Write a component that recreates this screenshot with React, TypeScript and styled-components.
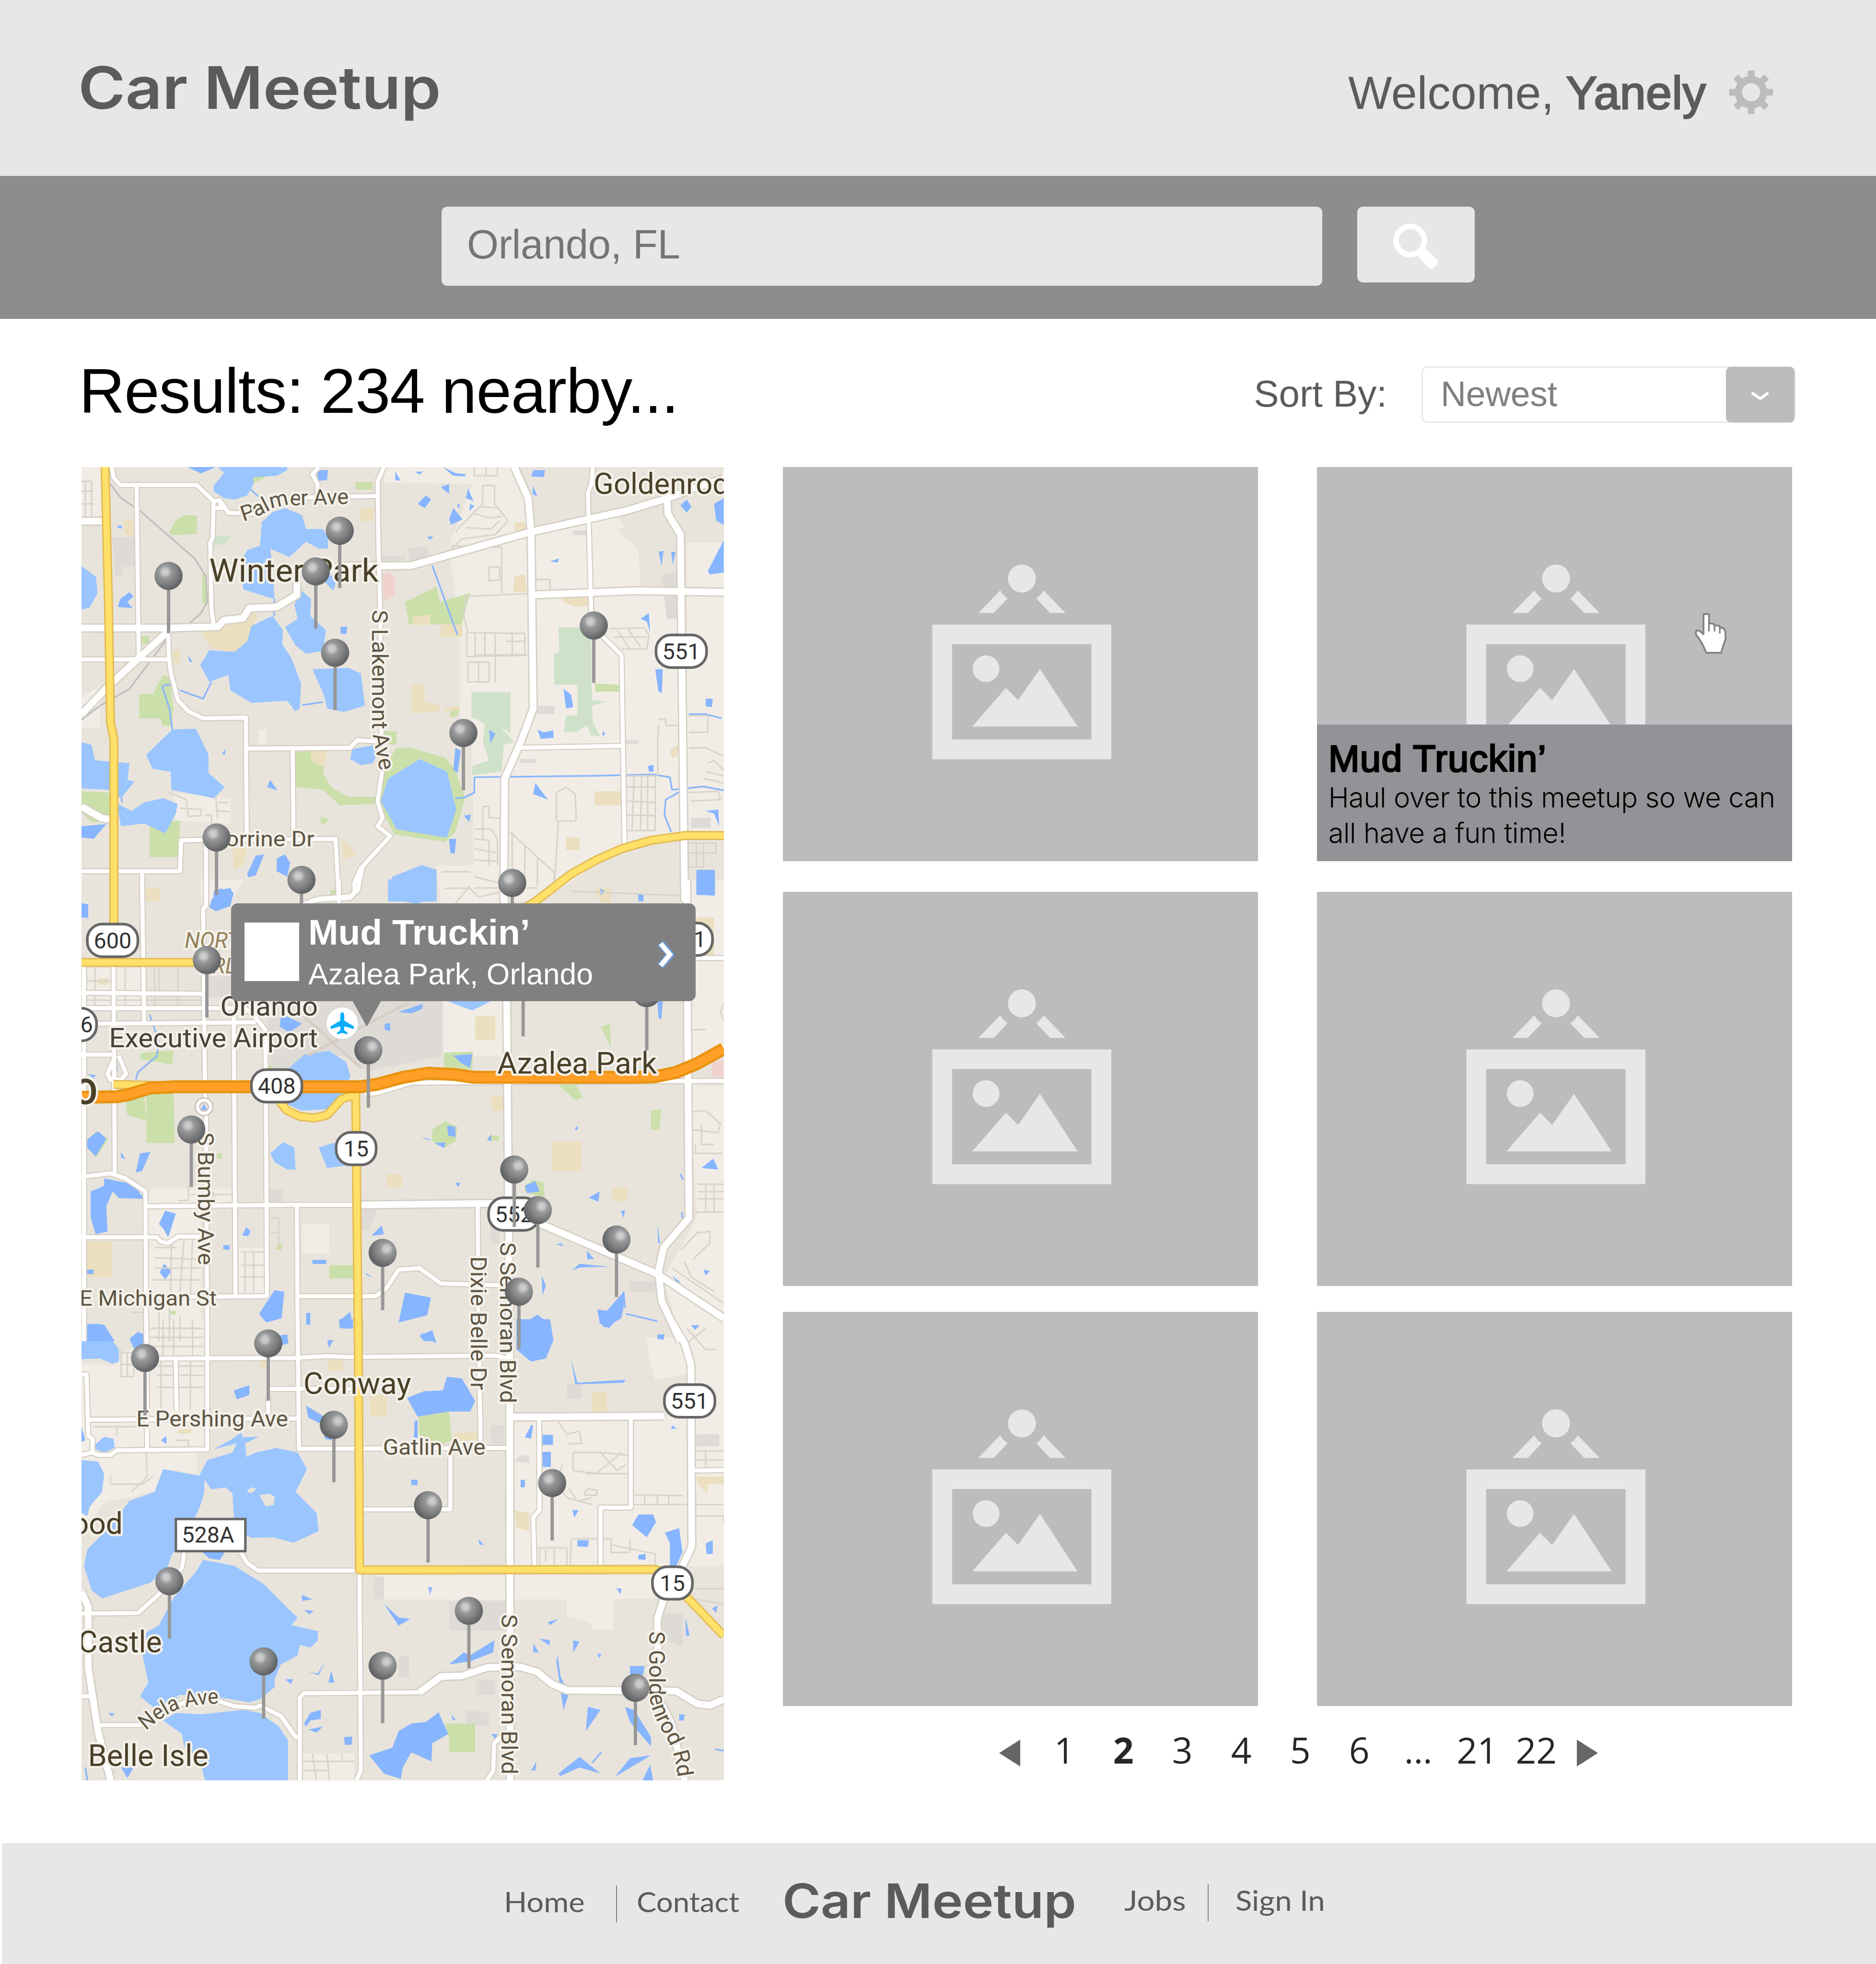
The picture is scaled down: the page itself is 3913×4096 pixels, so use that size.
import React from "react";
import styled, { createGlobalStyle, css } from "styled-components";

const Page = createGlobalStyle`
  body { margin: 0; background: #fff; }
  *, *::before, *::after { box-sizing: border-box; }
`;

const sans = `"Liberation Sans", Arial, sans-serif`;
const ink = "#5b5b5b";
const panel = "#e6e7e8";
const silver = "#bbbcbe";

/* ---------- layout ---------- */

const Screen = styled.div`
  width: 3913px;
  height: 4096px;
  display: flex;
  flex-direction: column;
  overflow: hidden;
  font-family: ${sans};
  color: ${ink};
`;

const Header = styled.header`
  height: 366.6px;
  flex: none;
  display: flex;
  align-items: baseline;
  justify-content: space-between;
  padding: 121.8px 214.7px 0 163px;
  background: ${panel};
`;

const Logo = styled.div<{ $size: number }>`
  width: max-content;
  font-family: Inter, sans-serif;
  font-weight: 600;
  font-size: ${(p) => p.$size}px;
  line-height: 1;
  white-space: nowrap;
  transform: scaleX(1.097);
  transform-origin: left;
`;

const Account = styled.div`
  display: flex;
  align-items: baseline;
  font-size: 97px;
  line-height: 97px;
  white-space: nowrap;
`;

const UserName = styled.span`
  margin-left: 25px;
  letter-spacing: 0.4px;
  -webkit-text-stroke: 3px ${ink};
`;

const Gear = styled.svg`
  width: 91px;
  height: 91px;
  margin-left: 49px;
  transform: translateY(10.9px);
`;

const SearchBar = styled.section`
  height: 298.5px;
  flex: none;
  display: flex;
  align-items: flex-start;
  gap: 73.5px;
  padding: 64.4px 0 0 921px;
  background: #8d8d8d;
`;

const SearchField = styled.div`
  width: 1836.9px;
  height: 165.3px;
  display: flex;
  align-items: center;
  padding: 0 0 8px 53px;
  border-radius: 12px;
  background: ${panel};
  color: #757575;
  font-size: 85px;
  letter-spacing: -0.4px;
`;

const SearchButton = styled.button`
  width: 244.6px;
  height: 158px;
  padding: 0;
  border: 0;
  border-radius: 12px;
  background: ${panel};
  svg { display: block; width: 100%; height: 100%; }
`;

const Main = styled.main`
  height: 3178.7px;
  flex: none;
`;

const TitleRow = styled.div`
  height: 308.7px;
  display: flex;
  align-items: flex-start;
  justify-content: space-between;
  padding: 84.5px 168.4px 0 165px;
`;

const Title = styled.h1`
  margin: 0;
  font-size: 132px;
  line-height: 132px;
  font-weight: 400;
  letter-spacing: -1.1px;
  color: #000;
`;

const Sort = styled.div`
  display: flex;
  align-items: center;
  margin-top: 14.3px;
  gap: 72px;
`;

const SortLabel = styled.span`
  padding-bottom: 5px;
  font-size: 78px;
  line-height: 78px;
`;

const Select = styled.div`
  width: 779.6px;
  height: 118.5px;
  display: flex;
  align-items: center;
  justify-content: space-between;
  border: 3.6px solid ${panel};
  border-radius: 12px;
  padding-left: 37px;
  color: #808080;
  font-size: 73.5px;
  line-height: 73px;
  letter-spacing: -0.4px;
  > span { padding-bottom: 3px; }
`;

const SelectArrow = styled.div`
  width: 142.5px;
  height: 115.4px;
  margin-right: -1px;
  border-radius: 10px;
  background: ${silver};
  svg { display: block; width: 100%; height: 100%; }
`;

const Content = styled.div`
  display: flex;
  align-items: flex-start;
  gap: 123.4px;
  padding-left: 169.9px;
`;

const MapFrame = styled.div`
  position: relative;
  width: 1340px;
  height: 2739px;
  flex: none;
  > svg { display: block; width: 100%; height: 100%; }
`;

const Callout = styled.div`
  position: absolute;
  left: 312.3px;
  top: 910.2px;
  width: 968.4px;
  height: 204.2px;
  display: flex;
  align-items: flex-start;
  border-radius: 14px;
  background: #808080;
  color: #fff;
  white-space: nowrap;
  &::after {
    content: "";
    position: absolute;
    left: 252.6px;
    top: 203px;
    border: solid transparent;
    border-width: 54px 30.3px 0;
    border-top-color: #808080;
  }
`;

const CalloutThumb = styled.div`
  width: 114.9px;
  height: 121.6px;
  margin: 40px 18.6px 0 27.4px;
  background: #fff;
`;

const CalloutText = styled.div`
  flex: 1;
  padding-top: 23px;
  strong { display: block; font-size: 75px; line-height: 75px; }
  span { display: block; margin-top: 9.5px; font-size: 62.5px; line-height: 80px; }
`;

const CalloutChevron = styled.svg`
  width: 38.5px;
  height: 59.6px;
  margin: 77px 44px 0 0;
`;

const Results = styled.div`
  width: 2104.4px;
`;

const Grid = styled.div`
  display: grid;
  grid-template-columns: 991px 991px;
  column-gap: 122.4px;
`;

const Card = styled.article<{ $gap: number }>`
  position: relative;
  height: 822.3px;
  margin-top: ${(p) => p.$gap}px;
  background: ${silver};
  > svg { display: block; width: 100%; height: 100%; }
`;

const Caption = styled.div`
  position: absolute;
  left: 0;
  right: 0;
  bottom: 0;
  height: 284.6px;
  padding: 31.5px 0 0 24px;
  background: #929396;
  color: #000;
  white-space: nowrap;
  h2 {
    margin: 0;
    font-size: 78px;
    line-height: 78px;
    font-weight: 400;
    letter-spacing: 1.1px;
    -webkit-text-stroke: 3px #000;
  }
  p {
    margin: 6.4px 0 0;
    font-family: Inter, sans-serif;
    font-weight: 300;
    font-size: 58px;
    line-height: 73.3px;
    letter-spacing: -0.5px;
  }
`;

const Cursor = styled.svg`
  && {
    position: absolute;
    left: 787.4px;
    top: 303.6px;
    width: 68.8px;
    height: 88.4px;
  }
`;

const Pager = styled.nav`
  display: flex;
  align-items: flex-start;
  margin: 53.6px 0 0 450.7px;
  font-family: "Open Sans", sans-serif;
  font-size: 75px;
  line-height: 75px;
  color: #262626;
`;

const PageLink = styled.span<{ $current?: boolean }>`
  width: 123px;
  padding-left: 1px;
  text-align: center;
  ${(p) => p.$current && css`font-weight: 700;`}
`;

const Arrow = styled.i<{ $next?: boolean }>`
  margin: ${(p) => (p.$next ? "16.6px 0 0 23.5px" : "16.6px 30.3px 0 0")};
  border: solid transparent;
  border-width: ${(p) => (p.$next ? "28.2px 0 28.2px 44.2px" : "28.2px 44.2px 28.2px 0")};
  ${(p) => (p.$next ? "border-left-color" : "border-right-color")}: #666;
`;

const Footer = styled.footer`
  height: 252.2px;
  flex: none;
  display: flex;
  align-items: flex-start;
  margin-left: 3.7px;
  background: ${panel};
`;

const FooterLink = styled.a<{ $left: number; $width: number; $top: number; $stretch: number }>`
  flex: none;
  width: ${(p) => p.$width}px;
  margin: ${(p) => p.$top}px 0 0 ${(p) => p.$left}px;
  font-family: Lato, sans-serif;
  font-size: 59px;
  line-height: 60px;
  white-space: nowrap;
  transform: scaleX(${(p) => p.$stretch});
  transform-origin: left;
`;

const Divider = styled.i<{ $left: number; $top: number }>`
  width: 2px;
  height: 77px;
  margin: ${(p) => p.$top}px 0 0 ${(p) => p.$left}px;
  background: #808080;
`;

const FooterLogo = styled.div`
  width: 610px;
  flex: none;
  margin: 71.4px 0 0 89.8px;
`;

/* ---------- map artwork ---------- */

type Tile = {
  top: number;
  sy: number;
  light: string[];
  grey: string[];
  park: string[];
  golf: string[];
  tan: string[];
  pink: string[];
  lake: string[];
  pond: string[];
  stream: string[];
  rail: string[];
  lane: string[];
  street: string[];
  avenue: string[];
  yellow: string[];
  orange: string[];
};

const SX = 0.95663;

const north: Tile = {
  top: 1050,
  sy: 0.63776,
  light: [
    "735,19 1060,19 1060,80 735,75",
    "945,80 1060,80 1095,240 1215,200 1285,185 1310,235 1285,240 1340,310 1345,450 1440,450 1450,1330 1300,1380 1110,1568 950,1568 945,1000 915,900 915,600 890,300",
    "1455,290 1543,290 1543,1330 1455,1330",
    "16,19 72,19 72,225 16,225",
    "235,1180 370,1200 370,1290 240,1280",
    "860,1440 950,1440 950,1568 870,1568",
    "438,955 456,955 456,1008 438,1008",
    "16,840 60,800 60,950 16,950",
  ],
  grey: [
    "88,268 145,268 145,370 115,375 112,410 95,408 95,370",
    "730,335 785,335 785,352 730,352",
    "793,310 835,298 845,335 850,350 795,358",
    "1185,245 1218,245 1218,262 1185,262",
    "1395,405 1436,390 1436,560 1408,560",
    "1310,992 1340,992 1340,1006 1310,1006",
    "1058,1060 1098,1060 1098,1074 1058,1074",
    "1465,1270 1512,1270 1512,1305 1465,1305",
    "1100,870 1140,870 1140,900 1100,900",
  ],
  park: [
    "225,250 240,210 262,190 291,192 290,258 228,262",
    "153,828 185,828 210,760 225,770 235,880 228,945 208,940 205,915 153,915",
    "178,1285 250,1280 249,1410 178,1410",
    "785,500 860,445 868,500 940,468 920,580 795,580",
    "525,1035 600,1030 590,1110 610,1160 650,1195 720,1195 718,1220 630,1225 590,1170 525,1160",
    "735,1090 765,1020 800,1020 880,1055 905,1100 928,1200 905,1320 880,1355 760,1330 725,1230",
    "667,72 708,72 708,100 667,100",
    "1236,790 1295,795 1295,820 1238,820",
    "16,1175 80,1180 90,1240 90,1285 40,1285 16,1250",
    "735,960 766,962 764,1008 735,1008",
    "893,885 915,885 908,910 893,910",
    "303,400 314,400 314,505 303,505",
    "160,622 177,622 177,650 160,650",
    "585,1265 605,1275 595,1292 585,1290",
    "425,40 458,50 425,78",
    "608,1528 622,1528 622,1545 608,1545",
  ],
  golf: [
    "1150,590 1200,590 1228,640 1228,760 1232,930 1250,980 1228,975 1218,940 1190,965 1162,965 1168,905 1195,905 1195,795 1140,795 1140,685 1152,680",
    "943,822 1036,822 1036,970 1010,940 1045,1000 1020,1010 1015,1105 945,1118 945,1085 985,1065 970,1000 975,935 943,910",
    "330,268 375,262 360,290 332,300",
    "1230,850 1265,855 1232,870",
  ],
  tan: [
    "300,610 350,590 420,540 435,545 412,640 380,680 325,665",
    "800,795 832,795 832,855 870,870 865,890 800,898",
    "675,168 712,165 708,212 678,212",
    "1045,410 1070,400 1075,465 1042,465",
    "1045,215 1068,215 1078,250 1045,245",
    "1160,480 1225,480 1220,515 1190,518 1160,500",
    "870,580 922,580 922,625 870,625",
    "803,552 845,545 845,582 803,582",
    "1236,1175 1300,1175 1300,1225 1236,1225",
    "1168,1340 1200,1340 1200,1385 1168,1385",
    "635,1345 672,1400 638,1420",
    "115,208 140,208 140,262 120,262",
    "232,672 252,672 250,718 235,718",
    "562,1032 600,1032 592,1090 562,1065",
    "375,1380 410,1380 400,1440 378,1455",
    "16,1075 50,1080 30,1105 16,1105",
    "168,1525 203,1520 198,1568 170,1568",
    "1238,1525 1275,1530 1272,1568 1250,1568",
    "1415,1030 1436,1005 1432,1050 1420,1058",
    "880,878 915,868 915,885 880,892",
  ],
  pink: ["732,400 745,390 762,420 760,480 735,497", "16,1105 40,1110 20,1135"],
  lake: [
    "340,19 505,19 505,30 480,50 425,55 425,80 410,120 380,135 355,130 330,105 330,85 355,40",
    "500,165 540,190 550,240 590,240 602,270 602,310 580,310 550,285 510,340 465,310 470,370 475,490 400,455 398,345 410,315 440,300 445,215 470,180",
    "470,550 495,600 493,650 515,700 538,790 535,880 524,890 505,852 420,860 370,815 365,760 320,785 298,725 320,672 380,678 410,640 420,585",
    "540,460 562,490 560,550 597,600 590,675 550,685 525,655 500,590 530,560 522,510",
    "565,740 650,735 680,755 690,870 640,892 600,880 592,830",
    "232,955 288,952 318,1045 318,1110 356,1160 332,1200 230,1170 228,1105 185,1095 170,1045",
    "16,372 50,410 54,470 35,520 16,528",
    "16,1000 40,1010 48,1065 130,1075 125,1135 142,1140 110,1200 80,1170 16,1165",
    "100,1218 135,1245 165,1215 210,1200 245,1220 240,1255 215,1325 165,1290 110,1300",
    "820,1060 885,1105 907,1240 885,1340 850,1332 765,1310 728,1210 745,1130",
    "755,1480 825,1438 860,1455 860,1568 745,1568 745,1530",
    "660,1025 712,1010 725,1030 708,1075 680,1082 655,1060",
    "590,400 625,410 615,460 595,430",
  ],
  pond: [
    "268,19 300,42 335,19",
    "575,30 602,30 600,65 580,68",
    "815,150 835,120 847,135 832,165",
    "870,90 890,80 890,115",
    "935,95 948,140 930,130",
    "762,35 775,68 762,65",
    "808,35 828,35 820,46",
    "890,205 900,165 922,205 895,225",
    "908,155 915,150 915,168",
    "940,150 950,158 938,176",
    "838,268 852,265 845,280",
    "1090,30 1118,30 1115,55 1085,52",
    "1090,85 1100,125 1088,115",
    "1440,155 1455,135 1466,160 1455,182",
    "1520,150 1543,130 1543,225 1525,210",
    "1505,390 1543,280 1543,395 1510,402",
    "1388,320 1400,318 1395,372",
    "1418,320 1428,322 1422,368",
    "1130,355 1152,345 1148,360",
    "130,465 140,480 125,500 138,522 102,518 108,490",
    "632,588 648,588 645,615 632,612",
    "1162,810 1180,830 1185,875 1168,880",
    "1345,560 1365,540 1368,610 1360,570",
    "1100,955 1115,965 1138,958 1138,985 1108,988",
    "1500,845 1517,845 1515,875 1500,872",
    "457,1160 465,1135 482,1172",
    "1095,1145 1125,1205 1090,1185",
    "905,1020 918,1030 910,1110 900,1100",
    "410,1470 430,1405 450,1400 430,1475 412,1482",
    "480,1415 500,1400 512,1430 505,1480 480,1460",
    "1478,1455 1522,1455 1522,1545 1478,1545",
    "890,1345 907,1345 903,1398 893,1395",
    "330,1530 370,1520 378,1545 350,1568 330,1568",
    "1380,740 1398,740 1396,825 1388,820",
    "925,1262 942,1258 938,1285",
    "875,19 905,40 930,45 928,52 900,50",
    "16,1300 75,1292 45,1345 16,1340",
    "1500,1245 1530,1240 1532,1300 1520,1255",
    "1363,1085 1376,1080 1376,1105 1365,1105",
    "270,690 280,715 272,712",
    "985,955 1000,970 988,1005",
    "1255,960 1262,970 1255,980",
    "350,1040 358,1025 357,1045",
    "102,228 112,228 112,238 102,236",
    "1340,1540 1352,1540 1352,1568 1340,1568",
  ],
  stream: [
    "230,795 218,795 208,803 225,880 232,955",
    "250,815 305,845 325,785",
    "540,868 590,857",
    "475,490 474,550",
    "850,370 910,618",
    "905,1200 925,1198 950,1180 950,1125 1230,1120 1375,1115 1415,1125 1420,1170 1495,1158 1543,1172",
    "1440,1175 1405,1205 1402,1260 1418,1320",
    "1460,900 1500,900 1538,915",
    "415,95 445,135",
    "48,1065 62,1088",
    "110,1190 112,1215",
  ],
  rail: [
    "85,80 110,130 140,160",
    "155,175 285,345 312,410 315,500 300,540 262,590",
    "222,625 180,710 130,810 60,870 16,920",
  ],
  lane: [
    "950,19 950,50 1005,50 1005,19",
    "978,19 978,50",
    "970,85 998,85 998,150 1030,210 1000,260 920,275 890,320",
    "970,85 970,150 930,210 905,250",
    "960,160 1010,165",
    "950,185 985,200 1015,195",
    "930,235 990,240 1010,210",
    "895,300 1015,305 1015,470",
    "985,375 1010,375 1010,420 985,425 985,375",
    "930,480 1085,470",
    "930,480 925,550 935,610 1070,612 1070,690 932,695 932,610",
    "952,610 952,695",
    "975,610 975,695",
    "1000,610 1000,790",
    "1025,640 1070,640",
    "1040,612 1040,690",
    "935,715 985,715 985,785 935,785 935,715",
    "960,715 960,785",
    "950,690 1080,688",
    "1270,595 1355,592 1365,620 1360,668 1300,668",
    "1290,600 1318,665",
    "1315,597 1345,660",
    "1280,625 1360,625",
    "1386,918 1405,918 1405,940 1440,940",
    "1460,1020 1500,1020 1543,1050",
    "1460,905 1505,905 1505,965 1460,965",
    "1505,1075 1520,1065 1543,1100",
    "1500,1105 1543,1120",
    "1495,1130 1543,1145",
    "1310,1120 1380,1120 1380,1315 1310,1315",
    "1330,1120 1325,1315",
    "1348,1120 1345,1315",
    "1362,1120 1362,1315",
    "1310,1160 1380,1160",
    "1310,1210 1380,1215",
    "1310,1260 1380,1262",
    "1460,1180 1530,1175 1535,1205 1465,1210",
    "1145,1280 1145,1180 1168,1160 1190,1185 1192,1280 1145,1282",
    "970,1350 970,1230 985,1228 985,1270 1010,1270",
    "950,1310 990,1310 1005,1345 1005,1440",
    "950,1345 985,1350 985,1440",
    "950,1380 1005,1395",
    "950,1420 1005,1425",
    "950,1480 1005,1500",
    "1035,1320 1140,1465 1140,1520",
    "1040,1320 1040,1500",
    "1070,1370 1070,1500",
    "1100,1415 1100,1510",
    "1150,1282 1140,1520",
    "950,1520 1100,1520",
    "225,1180 265,1205 270,1265 300,1262 300,1240 250,1235",
    "335,1190 340,1275",
    "340,1215 365,1215",
    "340,1245 368,1248",
    "310,1260 325,1260 325,1310",
    "872,1462 940,1462",
    "16,70 40,70 40,195",
    "16,105 45,105",
    "16,150 45,150",
    "25,70 25,195",
    "1460,1360 1525,1360 1525,1395 1460,1395",
    "1478,1360 1478,1445",
    "1495,1360 1495,1445 1460,1445",
    "1095,420 1130,420 1130,460",
    "1388,940 1386,1000 1386,1120",
  ],
  street: [
    "88,19 92,55 108,83 290,83 330,140 328,270 322,290 325,530 330,580",
    "147,88 152,700",
    "330,140 345,138 365,182 430,185",
    "330,165 350,165 345,140",
    "530,128 718,122",
    "580,19 565,45 577,80 577,125",
    "735,19 720,70 722,300 726,520 730,1110 720,1210 732,1270 720,1300 750,1335 680,1450 665,1500 665,1540",
    "16,705 222,705",
    "222,600 224,700 228,750 245,850 270,890 305,915 407,912 407,1020 409,1345",
    "409,1023 655,1020 672,993 720,998",
    "518,1020 520,1345",
    "16,1460 250,1460 253,1350 310,1348 620,1345 628,1568",
    "160,1460 160,1568",
    "312,1345 312,1568",
    "1232,19 1228,80 1220,110 1228,540",
    "1240,600 1300,690 1307,1360",
    "1055,1020 1305,1013",
    "560,1568 580,1558 655,1550 672,1530 685,1440",
  ],
  avenue: [
    "16,593 225,593 340,588 355,565 400,558 415,522 480,518 528,475 528,430",
    "225,600 80,800 16,900",
    "640,372 800,370 1080,252 1310,175 1410,130 1480,90 1543,60",
    "1408,120 1410,185 1440,260 1450,1568",
    "1045,19 1078,130 1085,252 1090,880 1060,1000 1022,1130 1020,1568",
    "1090,475 1330,460 1543,465",
    "16,212 75,212",
    "16,1230 65,1272 95,1275",
  ],
  yellow: ["72,19 80,500 85,930 93,990 93,1568", "1060,1600 1095,1568 1180,1470 1240,1420 1300,1380 1370,1350 1450,1333 1543,1333"],
  orange: [],
};

const central: Tile = {
  top: 2000,
  sy: 0.66964,
  light: [
    "870,0 1020,0 1020,90 870,90",
    "180,1050 380,1050 380,1090 300,1110 300,1568 170,1568 170,1110",
    "875,413 1020,413 1020,600 875,600",
    "1460,0 1543,0 1543,600 1460,620",
    "1460,700 1543,700 1543,1568 1440,1568 1400,1350 1480,1150",
    "390,1250 455,1250 455,1410 390,1410",
    "540,1170 605,1170 605,1270 540,1270",
    "90,300 160,300 160,430 30,430 30,300",
    "300,0 400,0 372,80 300,80",
  ],
  grey: [
    "455,413 875,413 875,600 700,650 640,600 560,590 510,640 465,645",
    "318,330 372,330 372,400 318,400",
    "988,1160 1010,1160 1010,1235 988,1235",
    "1318,1365 1380,1365 1380,1400 1318,1400",
    "460,1050 495,1055 495,1095 460,1095",
    "680,1120 718,1120 700,1190 680,1190",
  ],
  park: [
    "170,725 235,725 238,895 170,895",
    "120,745 165,735 170,820 125,800",
    "155,590 235,580 232,630 200,620 155,610",
    "877,588 947,585 945,645 878,648",
    "850,850 880,820 910,840 905,890 880,910 850,890",
    "1370,785 1395,780 1390,850 1370,850",
    "25,900 50,855 80,880 50,945",
    "1070,1040 1090,1020 1115,1030 1118,1085 1070,1060",
    "1145,690 1185,680 1208,740 1190,750",
    "605,1310 662,1310 662,1355 605,1355",
    "1250,500 1272,490 1275,570 1285,600",
    "338,930 350,930 350,948 338,948",
    "985,870 1010,872 1008,888 985,886",
    "485,1230 495,1240 490,1260 478,1255",
    "455,625 490,650 500,690 465,680",
    "228,1465 240,1465 240,1478 228,1478",
  ],
  golf: ["60,1290 70,1270 75,1310 60,1315"],
  tan: [
    "952,465 1000,465 1000,545 952,545",
    "1135,890 1205,890 1205,990 1135,990",
    "742,1000 778,1000 778,1045 742,1045",
    "1278,1045 1315,1045 1312,1095 1278,1090",
    "990,735 1018,735 1018,785 990,785",
    "25,1230 90,1230 90,1350 25,1350",
    "170,30 205,30 200,75 172,72",
    "1240,30 1275,30 1275,80 1250,80",
    "55,335 80,335 80,358 55,358",
    "1475,130 1520,130 1520,260 1475,260",
    "1035,600 1050,620 1040,650",
  ],
  pink: ["1515,615 1543,615 1543,670 1515,670"],
  lake: [
    "510,640 545,595 605,582 645,620 655,665 640,740 600,780 540,785 500,760",
    "745,0 860,0 860,65 810,82 745,65",
    "885,413 990,413 945,445",
    "580,910 615,895 660,900 655,970 600,980",
    "465,930 495,892 522,910 525,985 505,985 475,960",
  ],
  pond: [
    "490,455 540,490 510,520 488,500",
    "325,70 345,30 378,45 370,90 335,108 320,95",
    "70,1015 140,1035 165,1085 105,1082 90,1060 75,1110 78,1195 50,1205 38,1150 38,1060 70,1040",
    "200,1170 215,1125 240,1135 228,1190 222,1215 210,1185",
    "145,995 155,930 180,925 160,990",
    "438,1475 475,1395 498,1400 492,1490 455,1505",
    "770,1505 785,1403 847,1420 838,1480",
    "628,1500 655,1468 662,1525 640,1525",
    "550,1472 560,1472 560,1512 550,1512",
    "1050,1568 1065,1510 1100,1478 1130,1510 1138,1568",
    "1478,0 1522,0 1522,55 1478,52",
    "16,1510 70,1512 95,1568 16,1568",
    "900,598 945,593 940,640 920,625",
    "27,885 55,855 75,880 50,940 25,905",
    "1070,1040 1095,1025 1105,1060 1075,1065",
    "885,835 905,840 905,875 888,870",
    "855,895 882,893 878,913",
    "1222,1080 1248,1060 1245,1095",
    "1490,980 1518,948 1530,985",
    "1242,1460 1265,1465 1305,1400 1305,1450 1300,1490 1260,1522 1248,1505",
    "1182,1328 1200,1305 1270,1315 1200,1318",
    "1218,1260 1235,1290 1218,1290",
    "705,1210 730,1175 735,1205",
    "398,1208 408,1180 418,1195 412,1212",
    "202,1335 212,1305 230,1330 215,1358",
    "565,1292 598,1292 598,1306 565,1306",
    "828,422 825,440 800,455 770,450",
    "737,490 750,488 750,515 737,510",
    "88,605 100,605 103,650 90,655",
    "353,1242 368,1242 368,1258 353,1256",
    "1385,1170 1392,1235 1387,1235",
    "1110,1345 1120,1380 1112,1412",
    "1340,48 1352,48 1352,72 1340,70",
    "1250,30 1260,40 1250,55",
    "823,872 848,885 840,885",
    "16,80 32,85 32,130 16,130",
    "110,925 120,950 110,945",
    "905,1030 917,1030 912,1045",
    "980,885 990,865 990,888",
    "1188,850 1195,835 1196,850",
    "1298,1125 1308,1125 1305,1150",
    "1145,1240 1155,1235 1163,1245",
    "1420,1345 1442,1370 1430,1365",
    "1495,1325 1510,1330 1500,1345",
    "1385,1545 1402,1545 1400,1560 1385,1558",
    "820,1550 850,1530 858,1568 830,1568",
    "1385,413 1398,413 1395,475 1388,470",
    "27,1325 45,1325 45,1340 27,1340",
    "690,1335 708,1350 695,1345",
    "1468,1518 1485,1515 1475,1530",
    "30,660 50,665 45,675",
  ],
  stream: ["178,460 200,550 195,600 150,655 145,680", "1310,1475 1385,1500", "1305,1400 1308,1455", "1440,1000 1446,1020", "1443,1130 1446,1160"],
  rail: [],
  lane: [
    "16,345 90,345",
    "48,295 48,430",
    "120,300 120,430",
    "190,300 190,430",
    "245,300 245,430",
    "16,410 310,410",
    "200,300 200,385",
    "270,1040 270,1090 245,1090",
    "275,1070 380,1070",
    "330,1060 330,1100",
    "190,1250 240,1250",
    "190,1285 300,1290",
    "190,1320 300,1320",
    "185,1360 300,1360",
    "260,1220 250,1400",
    "280,1220 275,1410",
    "230,1230 228,1410",
    "395,1265 450,1265",
    "405,1265 405,1410",
    "425,1265 425,1410",
    "395,1310 450,1310",
    "395,1350 450,1350",
    "465,1200 485,1200",
    "465,1150 485,1150 485,1250",
    "180,1525 300,1525",
    "200,1425 200,1568",
    "225,1425 225,1568",
    "250,1480 250,1568",
    "135,1470 165,1470 165,1500",
    "1465,790 1500,785 1535,830 1530,860 1470,850",
    "1490,830 1490,900 1520,900",
    "1475,900 1475,930 1540,930",
    "1480,1035 1543,1035",
    "1480,1060 1543,1060",
    "1480,1085 1543,1085",
    "1500,1035 1500,1130",
    "1520,1035 1520,1130",
    "1475,1130 1543,1130",
    "1440,1260 1480,1200 1510,1195 1510,1235 1470,1290",
    "1420,1320 1543,1440",
    "1450,1300 1465,1350 1520,1400",
    "880,30 940,30 960,60 1020,40",
    "900,90 940,20",
    "1180,40 1450,55",
    "1543,420 1535,450 1543,480",
    "1470,510 1500,510",
  ],
  street: [
    "160,0 165,485",
    "16,385 312,388",
    "16,437 405,437 430,470 453,510 455,850 457,1415",
    "50,490 430,485",
    "16,595 88,595",
    "378,450 382,1415",
    "92,265 95,1000",
    "22,290 22,1568",
    "312,0 312,90 305,100 310,745",
    "312,800 315,1568",
    "628,0 628,90",
    "16,1010 85,998 120,1015 168,1060 170,1568",
    "170,1110 520,1105 680,1105",
    "16,1215 195,1215 205,1230 222,1235 245,1213 305,1213",
    "528,1100 530,1568",
    "530,1415 715,1415 740,1390 770,1325 820,1320 870,1372 1010,1378",
    "958,1110 960,1568",
    "170,1418 457,1415",
    "690,730 720,725 800,690 1040,688 1543,684",
    "540,85 580,68 655,62 675,30 675,0",
    "1455,267 1543,267",
    "96,600 78,660 85,680 110,680 122,660 105,600",
  ],
  avenue: [
    "1020,0 1027,413 1034,1568",
    "1455,0 1460,1150 1400,1250 1388,1330 1395,1430 1440,1568",
    "680,1105 1000,1100",
    "1100,1165 1385,1340 1543,1490",
  ],
  yellow: ["93,0 93,265", "16,282 310,282", "487,755 505,785 535,805 570,810 600,800 635,745 668,732 674,1568", "92,696 200,700"],
  orange: ["16,740 100,738 130,730 180,708 240,704 680,704 720,695 780,672 840,658 900,662 950,672 1340,672 1380,670 1430,655 1480,625 1543,575"],
};

const south: Tile = {
  top: 3000,
  sy: 0.68878,
  light: [
    "175,0 315,0 315,430 170,430 100,433 16,440 16,150 100,150 120,100 170,100",
    "1040,320 1543,320 1543,815 1040,815",
    "720,845 1380,845 1380,920 1280,925 1280,1025 1230,1025 1225,1000 1170,980 1170,925 720,925",
    "1440,0 1543,0 1543,320 1470,320",
    "16,440 290,440 290,510 210,495 190,565 130,590 75,600 16,700",
    "540,1435 665,1435 665,1523 540,1523",
    "1360,60 1440,60 1460,180 1380,200 1365,130",
  ],
  grey: [
    "1170,215 1205,215 1205,262 1170,262",
    "990,350 1020,350 1020,412 990,412",
    "890,930 1025,930 1020,1028 890,1028",
    "1478,380 1532,380 1532,420 1478,420",
    "712,850 735,850 735,925 712,925",
    "770,1115 795,1110 795,1180 770,1185",
    "1395,970 1445,970 1445,1080 1400,1060",
    "955,1190 1000,1190 1000,1240 955,1240",
    "930,1290 985,1300 985,1345 930,1335",
    "1058,450 1080,450 1080,475 1045,470",
  ],
  park: ["817,322 890,305 897,400 870,415 820,405", "880,1335 952,1335 952,1430 890,1430 890,1380"],
  golf: ["250,340 275,350 265,360"],
  tan: [
    "702,250 742,250 742,322 702,322",
    "1230,240 1265,240 1265,310 1230,310",
    "602,135 638,135 638,170 602,170",
    "1045,630 1080,640 1080,700 1050,690",
    "1480,520 1543,520 1543,545 1505,545 1505,575 1480,545",
    "900,375 960,375 955,400 900,402",
    "245,365 278,362 275,378 245,378",
    "440,135 460,135 460,160 440,160",
  ],
  pink: [],
  lake: [
    "295,520 315,465 375,440 385,410 330,430 375,395 395,375 400,390 438,388 405,410 408,455 430,440 480,425 530,440 552,495 525,570 575,640 580,700 520,738 470,720 420,722 380,690 375,575 358,555 325,562 308,530",
    "210,495 308,520 308,570 300,610 275,690 230,780 220,820 180,870 65,922 40,895 22,815 30,760 80,690 130,600 190,570",
    "305,795 345,805 380,815 450,875 510,960 530,985 515,1010 578,1030 578,1060 560,1085 535,1075 530,1110 490,1140 475,1190 475,1215 440,1255 415,1265 350,1250 250,1240 190,1285 155,1245 175,1200 160,1100 170,1035 200,1010 235,920 290,830",
    "210,1325 240,1300 300,1305 400,1290 440,1300 485,1345 507,1390 507,1523 310,1523 300,1470 260,1410 255,1370",
    "16,15 60,15 105,100 105,140 90,147 60,130 16,132",
    "48,415 70,388 92,395 95,425 70,440 50,430",
    "16,465 55,470 70,510 65,570 35,620 30,650 16,640",
    "190,1285 230,1255 250,1245 210,1290",
  ],
  pond: [
    "130,65 150,42 165,50 165,95 140,95",
    "300,765 358,765 345,795 320,790",
    "790,260 830,238 875,235 885,190 920,195 952,270 940,305 890,305 815,322",
    "378,235 415,218 415,250 385,265",
    "550,285 590,320 612,370 610,400 595,395 585,345 555,325",
    "1050,0 1130,0 1138,70 1120,130 1085,140 1050,100",
    "460,60 505,50 508,80 480,90",
    "628,0 662,0 660,30 630,30",
    "700,1440 755,1415 770,1360 800,1335 835,1330 865,1298 888,1370 850,1400 848,1460 800,1430 780,1480 775,1518 735,1500",
    "1325,680 1340,645 1375,645 1382,670 1360,720",
    "1403,705 1437,690 1445,770 1430,815 1415,815 1415,740",
    "1112,382 1137,382 1137,415 1112,415",
    "1112,438 1132,438 1132,488 1112,488",
    "735,940 770,985 798,990 770,1012",
    "890,1140 925,1100 940,1110 998,1060 995,1100 940,1130",
    "1090,1070 1103,1100 1090,1100",
    "1125,1000 1150,990 1130,1010",
    "1185,1060 1200,1065 1185,1100",
    "1105,1055 1130,1060 1128,1078",
    "1148,1110 1155,1180 1175,1235 1162,1290 1145,1130",
    "1220,1280 1250,1290 1215,1360",
    "1308,1280 1330,1290 1370,1380 1370,1410 1320,1330",
    "1320,1145 1355,1145 1350,1180 1320,1180",
    "1150,1500 1200,1445 1250,1500 1200,1480 1155,1508",
    "1285,1510 1320,1450 1370,1440 1340,1465",
    "1350,1523 1368,1470 1375,1523",
    "545,1335 560,1300 585,1290 585,1320 560,1325 550,1345",
    "555,1355 590,1345 575,1365",
    "640,1380 660,1378 658,1405 642,1405",
    "820,50 850,40 860,80",
    "600,70 615,68 605,95",
    "540,910 565,925 540,930",
    "545,960 568,963 558,975",
    "800,530 815,530 815,548 800,548",
    "808,335 815,335 815,410 806,400",
    "960,725 972,745 962,745",
    "1500,740 1517,730 1517,775 1502,775",
    "1195,730 1222,730 1220,752 1195,750",
    "110,1480 140,1480 125,1515",
    "1180,130 1195,210 1310,200 1305,210 1190,215",
    "1245,10 1290,0 1270,30",
    "578,1170 595,1130 580,1175 555,1165",
    "610,1160 617,1200 603,1200",
    "1085,350 1090,350 1085,395 1070,390",
    "1060,530 1070,530 1070,555 1060,555",
    "1183,630 1198,630 1188,655",
    "1340,778 1357,775 1357,795 1340,793",
    "1420,350 1432,362 1418,362",
    "205,400 218,385 218,412",
    "16,355 25,400 16,405",
    "80,1300 95,1302 88,1312",
    "500,1190 518,1188 515,1205",
    "1085,1490 1098,1460 1095,1490",
    "895,1305 907,1325 898,1322",
    "1437,1305 1450,1305 1448,1325 1437,1325",
    "1465,20 1485,20 1475,35",
    "1385,50 1402,50 1400,68 1385,65",
    "990,1370 1005,1370 1000,1385",
    "1287,888 1300,890 1298,908",
    "1452,985 1462,1045 1453,1045",
    "1515,955 1528,945 1525,970",
    "1242,1105 1252,1105 1248,1120",
    "840,885 850,885 845,910",
  ],
  stream: ["25,1480 30,1523", "1230,1465 1252,1430", "1522,1420 1543,1425"],
  rail: [],
  lane: [
    "180,30 305,30",
    "180,60 305,60",
    "180,90 305,90",
    "210,0 210,120",
    "235,0 235,120",
    "280,0 280,120",
    "195,155 305,155",
    "195,185 305,185",
    "195,225 305,225",
    "205,135 205,300",
    "275,135 275,300",
    "110,110 140,110 140,190 110,190 110,110",
    "110,150 165,150",
    "125,110 125,190",
    "45,355 165,355",
    "100,355 100,385",
    "240,400 270,400 270,425",
    "85,545 160,545 185,520",
    "170,440 172,520 135,570",
    "85,515 85,545",
    "1150,340 1170,380 1200,370 1205,410 1175,412",
    "1185,440 1250,440 1290,500 1310,480",
    "1185,440 1185,500 1240,510 1300,440",
    "1215,510 1315,510",
    "1255,440 1315,450",
    "1160,480 1145,540 1170,590 1230,612",
    "1175,560 1195,600 1230,590",
    "1210,580 1220,560 1242,565 1240,582 1210,580",
    "1330,580 1445,582",
    "1330,612 1543,612",
    "1355,580 1355,612",
    "1385,580 1385,612",
    "1412,580 1412,612",
    "1475,435 1543,435",
    "1475,465 1543,465",
    "1500,435 1500,500",
    "1180,725 1275,725 1275,770 1320,770 1320,725",
    "1180,725 1178,815",
    "1100,755 1170,755 1170,815",
    "1105,760 1105,815",
    "1120,760 1120,800",
    "1140,760 1140,815",
    "1275,745 1380,775 1380,815",
    "1475,650 1543,650 1543,670",
    "1475,890 1543,890",
    "1475,925 1543,940",
    "1455,30 1500,100 1525,100",
    "1460,75 1500,30",
    "540,1460 665,1460",
    "565,1435 575,1523",
    "600,1435 605,1523",
    "540,1490 605,1490",
    "635,1435 635,1460",
  ],
  street: [
    "16,183 28,183 32,385 42,395 42,440 16,448",
    "42,440 55,448 85,448 100,433 315,430 315,0",
    "170,0 172,430",
    "240,130 242,300",
    "200,130 520,128 600,122 650,125 1000,120 1030,130",
    "30,332 530,328",
    "530,0 533,428 1030,425",
    "460,230 665,230",
    "460,250 460,310",
    "960,0 965,420",
    "893,430 893,628 685,628",
    "395,770 410,805 435,830 665,830",
    "260,770 255,820 240,850 195,915 150,970 16,972",
    "60,1340 170,1340 215,1290 300,1245 350,1265 380,1278 430,1283 440,1275 490,1310 525,1380 535,1380",
    "535,1523 535,1250 545,1235 820,1232",
    "677,835 680,1490 670,1523",
    "980,1523 995,1490 997,1400 1020,1370",
    "1104,330 1105,630 1090,655 1093,815",
    "1322,325 1322,622 1250,622 1250,815",
    "1470,500 1543,498",
    "16,1245 38,1245",
  ],
  avenue: [
    "16,900 32,950 32,1150 55,1360 85,1523",
    "820,1232 870,1180 920,1178 980,1150 1060,1148 1100,1165 1135,1205 1170,1225 1430,1228 1480,1270 1510,1275 1543,1255",
    "1034,0 1035,1523",
    "1415,0 1450,80 1465,150 1467,750 1445,815",
    "1400,925 1385,990 1388,1250 1420,1340 1450,1523",
    "1040,323 1400,320",
  ],
  yellow: ["674,0 677,828 1380,826 1415,845", "1450,910 1543,1045"],
  orange: [],
};

const tiles = [north, central, south];

type AreaKey = "light" | "grey" | "park" | "golf" | "tan" | "pink" | "lake" | "pond";
type LineKey = "stream" | "rail" | "lane" | "street" | "avenue" | "yellow" | "orange";

const inTile = (t: Tile) => `translate(170 ${t.top}) scale(${SX} ${t.sy})`;

const Areas = ({ kind, fill }: { kind: AreaKey; fill: string }) => (
  <>
    {tiles.map((t) => (
      <g key={t.top} transform={inTile(t)} fill={fill}>
        {t[kind].map((points, i) => <polygon key={i} points={points} />)}
      </g>
    ))}
  </>
);

const Lines = ({ kind, stroke, width }: { kind: LineKey; stroke: string; width: number }) => (
  <>
    {tiles.map((t) => (
      <g key={t.top} transform={inTile(t)} fill="none" stroke={stroke} strokeWidth={width} strokeLinejoin="round">
        {t[kind].map((points, i) => <polyline key={i} points={points} vectorEffect="non-scaling-stroke" />)}
      </g>
    ))}
  </>
);

const MapText = styled.text.attrs({ lengthAdjust: "spacingAndGlyphs" })<{
  $size: number;
  $fill?: string;
  $italic?: boolean;
  $weight?: number;
}>`
  font-family: Roboto, sans-serif;
  font-size: ${(p) => p.$size}px;
  font-style: ${(p) => (p.$italic ? "italic" : "normal")};
  font-weight: ${(p) => p.$weight ?? 450};
  fill: ${(p) => p.$fill ?? "#5e5543"};
  stroke: #f4f1ea;
  stroke-width: 10px;
  stroke-linejoin: round;
  paint-order: stroke;
`;

const ShieldText = styled.text`
  font-family: Roboto, sans-serif;
  font-size: 51px;
  fill: #333;
  text-anchor: middle;
`;

const place = "#4a4029";

const Shield = ({ x, y, w = 115, label, labelX = x }: { x: number; y: number; w?: number; label: string; labelX?: number }) => (
  <g>
    <rect x={x - w / 2} y={y - 37} width={w} height={74} rx={34} fill="#fff" stroke="#666" strokeWidth={6} />
    <ShieldText x={labelX} y={y + 18}>{label}</ShieldText>
  </g>
);

const pins: [Tile, number, number, "l" | "r"][] = [
  [north, 630, 246, "l"], [north, 573, 391, "l"], [north, 223, 407, "l"], [north, 619, 681, "l"],
  [north, 1234, 584, "l"], [north, 924, 967, "l"], [north, 337, 1340, "l"], [north, 539, 1491, "l"],
  [north, 1040, 1502, "l"],
  [central, 314, 274, "l"], [central, 1066, 338, "l"], [central, 1360, 386, "l"], [central, 698, 580, "r"],
  [central, 277, 849, "l"], [central, 1045, 985, "r"], [central, 1101, 1123, "r"], [central, 1288, 1223, "r"],
  [central, 732, 1268, "r"], [central, 1056, 1400, "r"],
  [south, 167, 128, "l"], [south, 460, 80, "l"], [south, 616, 349, "r"], [south, 840, 614, "r"],
  [south, 1135, 541, "l"], [south, 225, 865, "l"], [south, 449, 1130, "l"], [south, 732, 1144, "r"],
  [south, 937, 963, "l"], [south, 1333, 1217, "r"],
];

const CityMap = () => (
  <svg viewBox="185.3 1062 1461.2 2986.8" preserveAspectRatio="none">
    <defs>
      {(["l", "r"] as const).map((side) => (
        <radialGradient key={side} id={`ball-${side}`} cx={side === "l" ? 0.38 : 0.64} cy={0.36} r={0.62}>
          <stop offset="0" stopColor="#d0d1d2" />
          <stop offset="0.2" stopColor="#c2c3c4" />
          <stop offset="0.36" stopColor="#98999b" />
          <stop offset="0.7" stopColor="#7d7f81" />
          <stop offset="1" stopColor="#626466" />
        </radialGradient>
      ))}
      <path id="palmer" d="M553 1185 C572 1182 596 1170 622 1156 Q645 1147 672 1149 L830 1145" />
      <path id="lakemont" d="M846 1387 L846 1664 L866 1764" />
      <path id="goldenrodRd" d="M1476 3710 L1476 3850 Q1482 3900 1512 3945 Q1540 3990 1544 4070" />
      <path id="nela" d="M332 3936 Q385 3888 425 3882 Q455 3874 540 3873" />
    </defs>

    <rect x="185" y="1061" width="1463" height="2990" fill="#e8e4dc" />
    <Areas kind="light" fill="#f1ede6" />
    <Areas kind="grey" fill="#dedad5" />
    <Areas kind="park" fill="#cbdfaa" />
    <Areas kind="golf" fill="#cfe2c9" />
    <Areas kind="tan" fill="#ebdfbf" />
    <Areas kind="pink" fill="#f0d3cf" />
    <Lines kind="stream" stroke="#8ab5fb" width={3.4} />
    <Areas kind="lake" fill="#9ac5ff" />
    <Areas kind="pond" fill="#87b5ff" />
    <polygon points="590,3400 612,3397 625,3404 622,3423 604,3426" fill="#e8e4dc" />
    <polygon points="561,3389 575,3382 583,3387 570,3397" fill="#e8e4dc" />
    <g stroke="#d8cdc4" strokeWidth="6" fill="none">
      <path d="M690 2310 L822 2430 M930 2280 L700 2400" />
    </g>
    <Lines kind="rail" stroke="#bfbfbf" width={3.5} />
    <Lines kind="lane" stroke="#d9d4cb" width={3.2} />
    <Lines kind="street" stroke="#d5cec3" width={13} />
    <Lines kind="avenue" stroke="#d5cec3" width={19.5} />
    <Lines kind="street" stroke="#fff" width={8.4} />
    <Lines kind="avenue" stroke="#fff" width={14} />
    <Lines kind="yellow" stroke="#e3bb55" width={19} />
    <Lines kind="yellow" stroke="#ffe069" width={13} />
    <Lines kind="orange" stroke="#e8930f" width={27} />
    <Lines kind="orange" stroke="#ff9f27" width={17.5} />
    <circle cx="464" cy="2517" r="15" fill="#e8e4dc" stroke="#c9c1b4" strokeWidth="13" />
    <circle cx="464" cy="2517" r="15" fill="none" stroke="#fff" strokeWidth="7" />
    <path d="M457 2524 L464 2510 L471 2524 Z" fill="#87b5ff" />

    <MapText $size={67} $fill={place} x={1350} y={1123}>Goldenrod</MapText>
    <MapText $size={49}><textPath href="#palmer">Palmer Ave</textPath></MapText>
    <MapText $size={72} $fill={place} x={476} y={1323} textLength={385}>Winter Park</MapText>
    <MapText $size={50}><textPath href="#lakemont" textLength={368} lengthAdjust="spacingAndGlyphs">S Lakemont Ave</textPath></MapText>
    <MapText $size={49} x={479} y={1925} textLength={236}>Corrine Dr</MapText>
    <Shield x={1549.5} y={1481} label="551" />
    <Shield x={256} y={2138.6} label="600" />
    <Shield x={1563} y={2136} label="551" />
    <MapText $size={50} $fill="#94815a" $italic x={420} y={2156}>NORTH</MapText>
    <MapText $size={50} $fill="#94815a" $italic x={449} y={2214}>ORLANDO</MapText>
    <MapText $size={60} $fill="#46423a" x={501} y={2310} textLength={222}>Orlando</MapText>
    <MapText $size={61} $fill="#46423a" x={248} y={2382} textLength={475}>Executive Airport</MapText>
    <circle cx="778.4" cy="2327" r="37" fill="#fff" stroke="#d6d2cb" strokeWidth="2" />
    <path
      fill="#09adfa"
      d="M778.4 2302 c3 0 4.5 4 4.5 8 v11 l22 13 v6 l-22 -6 v9 l7 5 v4 l-11.5 -3 -11.5 3 v-4 l7 -5 v-9 l-22 6 v-6 l22 -13 v-11 c0 -4 1.5 -8 4.5 -8 z"
    />
    <Shield x={162} y={2330} label="6" labelX={197} />
    <Shield x={629.2} y={2469.4} label="408" />
    <MapText $size={80} $fill={place} $weight={600} x={222} y={2511} textAnchor="end">O</MapText>
    <MapText $size={69} $fill={place} x={1131} y={2441} textLength={363}>Azalea Park</MapText>
    <Shield x={810} y={2612} w={91} label="15" />
    <MapText $size={50} transform="translate(450 2575) rotate(90)" textLength={302}>S Bumby Ave</MapText>
    <Shield x={1168.7} y={2761} label="552" />
    <MapText $size={50} transform="translate(1071 2857) rotate(90)" textLength={304}>Dixie Belle Dr</MapText>
    <MapText $size={50} transform="translate(1137 2825) rotate(90)" textLength={366}>S Semoran Blvd</MapText>
    <MapText $size={49} x={181} y={2969} textLength={312}>E Michigan St</MapText>
    <MapText $size={69} $fill={place} x={690} y={3170} textLength={245}>Conway</MapText>
    <MapText $size={50} x={310} y={3244} textLength={345}>E Pershing Ave</MapText>
    <MapText $size={50} x={871} y={3308} textLength={233}>Gatlin Ave</MapText>
    <Shield x={1568.5} y={3186} label="551" />
    <MapText $size={68} $fill={place} x={279} y={3488} textAnchor="end">ood</MapText>
    <rect x="400" y="3454.5" width="158" height="73" fill="#fff" stroke="#666" strokeWidth="5.5" />
    <ShieldText x={473} y={3508}>528A</ShieldText>
    <Shield x={1529.4} y={3600} w={91} label="15" />
    <MapText $size={68} $fill={place} x={178} y={3758} textLength={190}>Castle</MapText>
    <MapText $size={50} transform="translate(1140 3671) rotate(90)" textLength={364}>S Semoran Blvd</MapText>
    <MapText $size={50}><textPath href="#goldenrodRd" textLength={345} lengthAdjust="spacingAndGlyphs">S Goldenrod Rd</textPath></MapText>
    <MapText $size={49}><textPath href="#nela" textLength={182} lengthAdjust="spacingAndGlyphs">Nela Ave</textPath></MapText>
    <MapText $size={69} $fill={place} x={200} y={4016} textLength={274}>Belle Isle</MapText>

    {pins.map(([tile, px, py, side], i) => {
      const x = 170 + px * SX;
      const y = tile.top + py * tile.sy;
      return (
        <g key={i}>
          <rect x={x - 3.8} y={y} width={7.6} height={130.5} fill="#979797" />
          <circle cx={x} cy={y} r={32} fill={`url(#ball-${side})`} />
        </g>
      );
    })}
  </svg>
);

/* ---------- icons ---------- */

const GearIcon = () => (
  <Gear viewBox="-150 -150 300 300">
    <g fill={silver}>
      {[0, 45, 90, 135].map((a) => (
        <g key={a} transform={`rotate(${a})`}>
          <rect x="-23" y="-150" width="46" height="72" />
          <rect x="-23" y="78" width="46" height="72" />
        </g>
      ))}
    </g>
    <circle r="87" fill="none" stroke={silver} strokeWidth="50" />
  </Gear>
);

const SearchIcon = () => (
  <svg viewBox="3087.6 470 266.7 172.3">
    <circle cx="3208" cy="547" r="32.2" fill="none" stroke="#fff" strokeWidth="12.6" />
    <path d="M3226 583 L3243 565 L3272 593 Q3270 606 3254 612 Z" fill="#fff" />
  </svg>
);

const PlaceholderIcon = () => (
  <svg viewBox="0 0 1080.7 896.7" fill={panel}>
    <circle cx="543.7" cy="253.6" r="31.8" />
    <path d="M494.4 280.5 Q500 291 511.2 298.7 L479.8 332 H444.6 Z" />
    <path d="M593 280.5 Q587.4 291 576.2 298.7 L607.6 332 H642.8 Z" />
    <path fillRule="evenodd" d="M339.8 358.1 H747 V664.7 H339.8 Z M384.9 402.9 V619.8 H701.8 V402.9 Z" />
    <circle cx="462.2" cy="458.7" r="30.4" />
    <path d="M430.9 590.1 L507.4 502.3 L534.9 530.2 L584.7 459.3 L670.4 590.1 Z" />
  </svg>
);

const HandCursor = () => (
  <Cursor viewBox="1240 96 168 216">
    <path
      fill="#fff"
      stroke="#808184"
      strokeWidth="9"
      d="M1287 208 V110 Q1287 105 1292 105 H1310 Q1315 105 1315 110 V153 H1328 Q1340 153 1343 163 H1356 Q1368 163 1371 172 Q1399 175 1399 206 V233 Q1384 274 1377 302 H1300 Q1283 253 1254 217 Q1248 209 1248 206 V194 Q1248 189 1254 189 H1260 Q1272 190 1287 210"
    />
    <path fill="none" stroke="#808184" strokeWidth="8" d="M1314.5 150 V194 M1343 160 V194 M1370 170 V204" />
  </Cursor>
);

const pages = ["1", "2", "3", "4", "5", "6", "...", "21", "22"];
const rowGap = [0, 63.8, 53.8];

export default function App() {
  return (
    <Screen>
      <Page />
      <Header>
        <Logo $size={122}>Car Meetup</Logo>
        <Account>
          <span>Welcome,</span>
          <UserName>Yanely</UserName>
          <GearIcon />
        </Account>
      </Header>

      <SearchBar>
        <SearchField>Orlando, FL</SearchField>
        <SearchButton aria-label="Search"><SearchIcon /></SearchButton>
      </SearchBar>

      <Main>
        <TitleRow>
          <Title>Results: 234 nearby...</Title>
          <Sort>
            <SortLabel>Sort By:</SortLabel>
            <Select>
              <span>Newest</span>
              <SelectArrow>
                <svg viewBox="3925.5 834 155.4 126">
                  <path d="M3984 893 L4003.5 906.5 L4022 893" fill="none" stroke="#fff" strokeWidth="6.5" />
                </svg>
              </SelectArrow>
            </Select>
          </Sort>
        </TitleRow>

        <Content>
          <MapFrame>
            <CityMap />
            <Callout>
              <CalloutThumb />
              <CalloutText>
                <strong>Mud Truckin’</strong>
                <span>Azalea Park, Orlando</span>
              </CalloutText>
              <CalloutChevron viewBox="1493 2139 42 65">
                <path d="M1503 2145 L1526.5 2171.5 L1503 2198" fill="none" stroke="#6f97d3" strokeWidth="17" />
                <path d="M1504 2146.5 L1525 2171.5 L1504 2196.5" fill="none" stroke="#fff" strokeWidth="11" />
              </CalloutChevron>
            </Callout>
          </MapFrame>

          <Results>
            <Grid>
              {Array.from({ length: 6 }, (_, i) => (
                <Card key={i} $gap={rowGap[Math.floor(i / 2)]}>
                  <PlaceholderIcon />
                  {i === 1 && (
                    <>
                      <Caption>
                        <h2>Mud Truckin’</h2>
                        <p>Haul over to this meetup so we can<br />all have a fun time!</p>
                      </Caption>
                      <HandCursor />
                    </>
                  )}
                </Card>
              ))}
            </Grid>
            <Pager>
              <Arrow />
              {pages.map((n) => <PageLink key={n} $current={n === "2"}>{n}</PageLink>)}
              <Arrow $next />
            </Pager>
          </Results>
        </Content>
      </Main>

      <Footer>
        <FooterLink $left={1047.3} $width={165} $top={92.4} $stretch={1.073}>Home</FooterLink>
        <Divider $left={68.8} $top={88.5} />
        <FooterLink $left={41} $width={214} $top={92.4} $stretch={1.047}>Contact</FooterLink>
        <FooterLogo><Logo $size={98.8}>Car Meetup</Logo></FooterLogo>
        <FooterLink $left={103.2} $width={131} $top={89.4} $stretch={1.11}>Jobs</FooterLink>
        <Divider $left={42.8} $top={86} />
        <FooterLink $left={56} $width={190} $top={89.4} $stretch={1.075}>Sign In</FooterLink>
      </Footer>
    </Screen>
  );
}
